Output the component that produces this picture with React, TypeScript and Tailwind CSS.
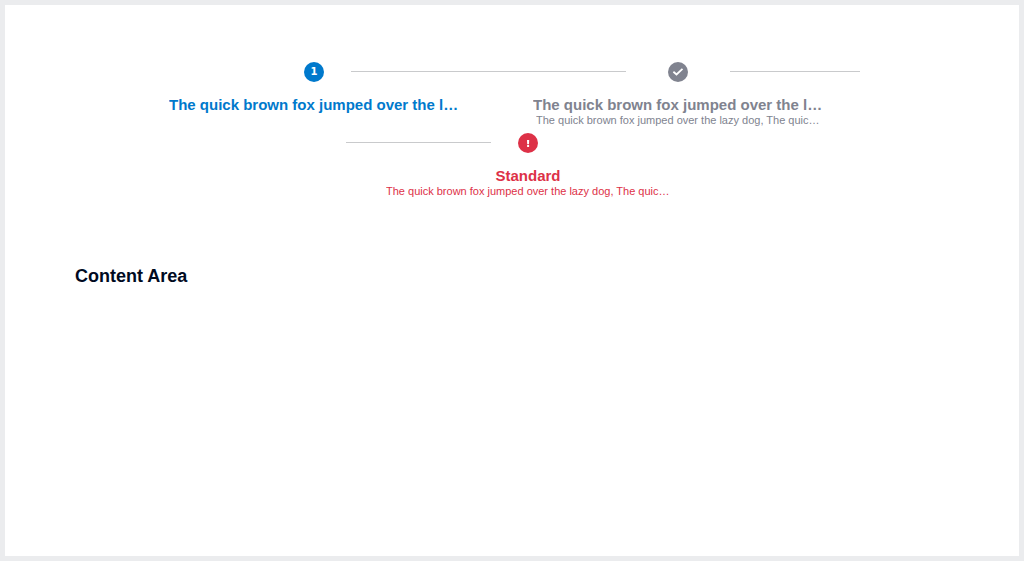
import type { ReactNode } from "react";

const TITLE = "The quick brown fox jumped over the lazy dog";
const SUBTITLE = "The quick brown fox jumped over the lazy dog, The quick brown fox";

type StepProps = {
  icon: ReactNode;
  title: string;
  subtitle?: string;
  color: string;
  badge: string;
  width: string;
};

function Step({ icon, title, subtitle, color, badge, width }: StepProps) {
  return (
    <li className={`flex shrink-0 justify-center ${width}`}>
      <button type="button" className={`flex w-[290px] shrink-0 flex-col items-center ${color}`}>
        <span
          className={`mb-3.5 flex size-5 items-center justify-center rounded-full text-white ${badge}`}
        >
          {icon}
        </span>
        <span className="block max-w-full truncate text-[15px] leading-[18px] font-bold">
          {title}
        </span>
        {subtitle && (
          <span className="block max-w-[284px] truncate text-[11px] leading-3">{subtitle}</span>
        )}
      </button>
    </li>
  );
}

function Connector({ size }: { size: string }) {
  return <li aria-hidden="true" className={`mt-[9px] h-px bg-[#c9cacc] ${size}`} />;
}

function CheckIcon() {
  return (
    <svg viewBox="0 0 20 20" className="size-5" fill="none" stroke="currentColor" strokeWidth="1.8">
      <path d="M5.4 9.8 8.5 12.5 14.5 6.8" />
    </svg>
  );
}

function AlertIcon() {
  return (
    <svg viewBox="0 0 20 20" className="size-5" fill="currentColor">
      <path d="M9 7h2.2l-.2 4.3H9.2z" />
      <path d="M9.1 12h2v2h-2z" />
    </svg>
  );
}

export default function App() {
  return (
    <div className="flex min-h-screen bg-[#ebecee] p-[5px] font-['Liberation_Sans',Arial,sans-serif]">
      <main className="min-w-0 flex-1 bg-white pt-[57px]">
        <nav aria-label="Progress">
          <ol className="flex h-[71px] items-start pr-[159px] pl-[272px]">
            <Step
              icon={
                <span className="font-['DejaVu_Sans',sans-serif] text-[10px] leading-5 font-bold">
                  1
                </span>
              }
              title={TITLE}
              color="text-[#0079cc]"
              badge="bg-[#0079cc]"
              width="w-[74px]"
            />
            <Connector size="flex-[275]" />
            <Step
              icon={<CheckIcon />}
              title={TITLE}
              subtitle={SUBTITLE}
              color="text-[#80838f]"
              badge="bg-[#80838f]"
              width="w-[104px]"
            />
            <Connector size="flex-[130]" />
          </ol>
          <ol start={3} className="flex h-[71px] items-start pl-[341px]">
            <Connector size="w-[145px]" />
            <Step
              icon={<AlertIcon />}
              title="Standard"
              subtitle={SUBTITLE}
              color="text-[#dd3147]"
              badge="bg-[#dd3147]"
              width="w-[74px]"
            />
          </ol>
        </nav>
        <h1 className="mt-[60px] px-[70px] text-lg leading-6 font-bold text-[#000a1f]">
          Content Area
        </h1>
      </main>
    </div>
  );
}
